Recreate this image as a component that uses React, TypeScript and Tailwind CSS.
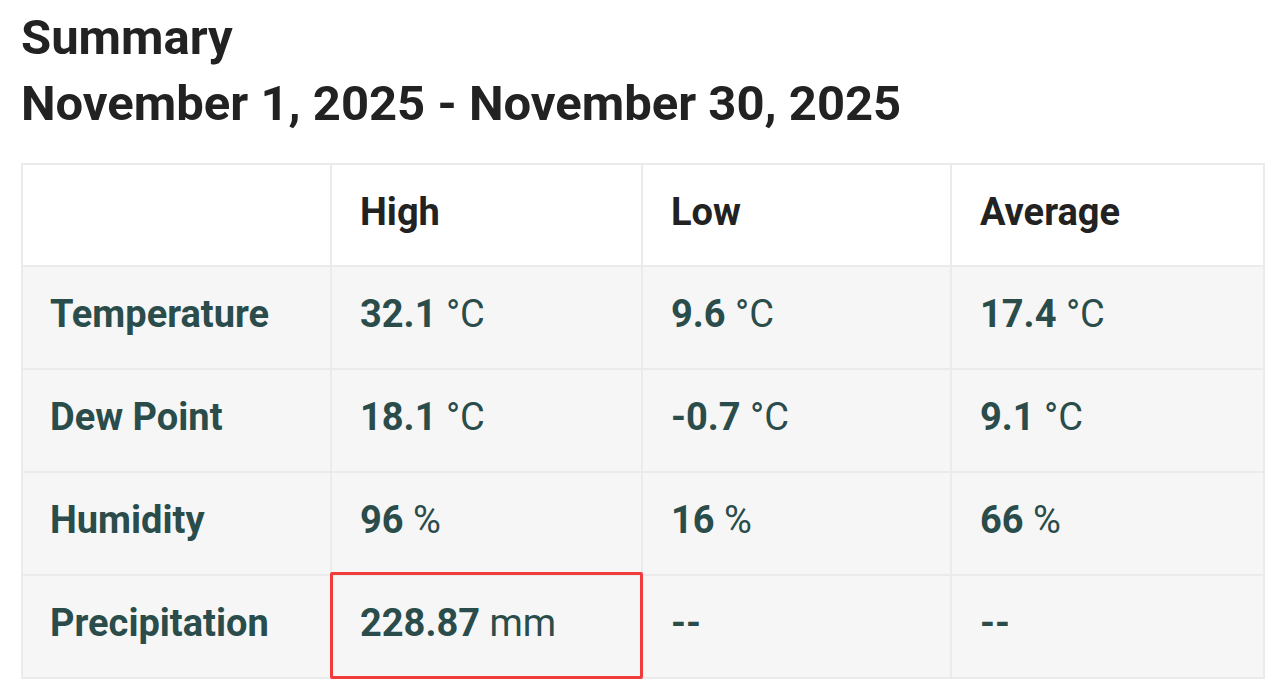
import React from 'react';

interface SummaryRow {
  label: string;
  high: [string, string];
  low: [string, string];
  avg: [string, string];
  highlight?: boolean;
}

const rows: SummaryRow[] = [
  { label: 'Temperature', high: ['32.1', '°C'], low: ['9.6', '°C'], avg: ['17.4', '°C'] },
  { label: 'Dew Point', high: ['18.1', '°C'], low: ['-0.7', '°C'], avg: ['9.1', '°C'] },
  { label: 'Humidity', high: ['96', '%'], low: ['16', '%'], avg: ['66', '%'] },
  { label: 'Precipitation', high: ['228.87', 'mm'], low: ['--', ''], avg: ['--', ''], highlight: true },
];

const Value: React.FC<{ v: [string, string] }> = ({ v }) => (
  <>
    <span className="font-bold">{v[0]}</span>
    {v[1] && <span className="font-normal"> {v[1]}</span>}
  </>
);

export default function App() {
  return (
    <div className="w-[1280px] h-[699px] bg-white overflow-hidden px-[21px] pt-[5px] font-['Roboto',sans-serif]">
      <h1 className="text-[49px] leading-[66px] font-bold text-[#222222]">
        Summary
        <br />
        November 1, 2025 - November 30, 2025
      </h1>

      <table className="mt-[26px] w-[1242px] table-fixed border-collapse text-[38px]">
        <thead>
          <tr className="h-[102px] bg-white">
            <th className="w-[309px] border-2 border-[#ebebeb]"></th>
            <th className="w-[311px] border-2 border-[#ebebeb] pl-[28px] pb-[6px] text-left font-bold text-[#222222]">High</th>
            <th className="w-[309px] border-2 border-[#ebebeb] pl-[28px] pb-[6px] text-left font-bold text-[#222222]">Low</th>
            <th className="w-[313px] border-2 border-[#ebebeb] pl-[28px] pb-[6px] text-left font-bold text-[#222222]">Average</th>
          </tr>
        </thead>
        <tbody>
          {rows.map((r) => (
            <tr key={r.label} className="h-[103px] bg-[#f6f6f6] text-[#2a4c4a]">
              <td className="border-2 border-[#ebebeb] pl-[27px] pb-[6px] font-bold">{r.label}</td>
              <td className="relative border-2 border-[#ebebeb] pl-[28px] pb-[6px]">
                <Value v={r.high} />
                {r.highlight && (
                  <div className="absolute left-[-2px] right-[-2px] top-[-4px] bottom-[-2px] border-[3px] border-[#f23b3b] rounded-[2px]"></div>
                )}
              </td>
              <td className="border-2 border-[#ebebeb] pl-[28px] pb-[6px]"><Value v={r.low} /></td>
              <td className="border-2 border-[#ebebeb] pl-[28px] pb-[6px]"><Value v={r.avg} /></td>
            </tr>
          ))}
        </tbody>
      </table>
    </div>
  );
}
